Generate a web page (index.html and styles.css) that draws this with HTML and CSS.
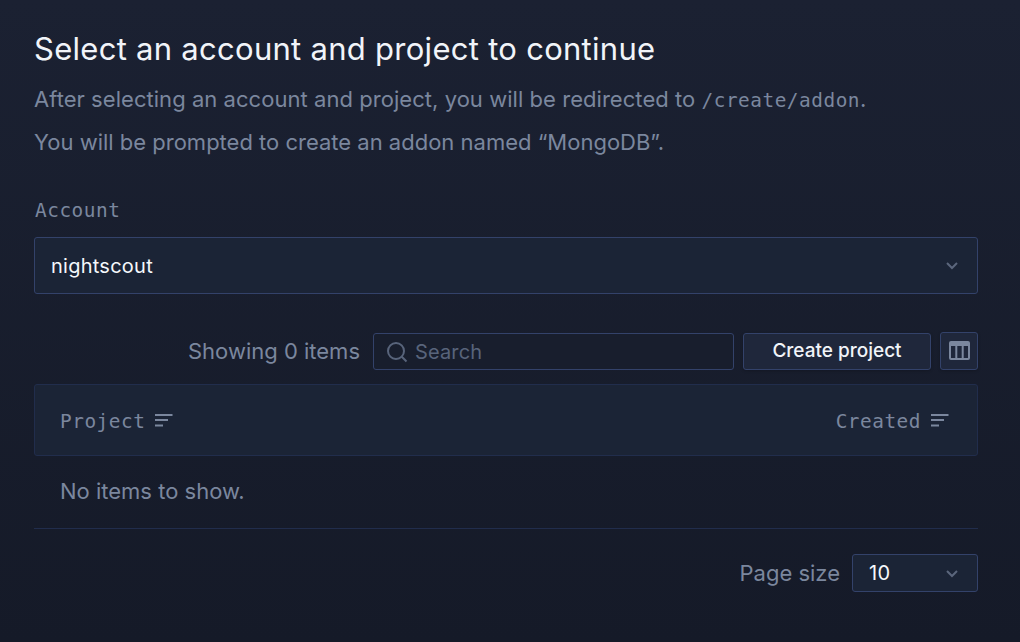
FILE: index.html
```html
<!DOCTYPE html>
<html lang="en">
<head>
<meta charset="utf-8">
<title>Select an account and project</title>
<link rel="stylesheet" href="styles.css">
</head>
<body>
<main class="page">
  <h1 class="title">Select an account and project to continue</h1>
  <p class="text redirect">After selecting an account and project, you will be redirected to <code class="mono">/create/addon</code>.</p>
  <p class="text">You will be prompted to create an addon named “MongoDB”.</p>

  <div class="label mono">Account</div>
  <div class="select account"><span>nightscout</span>
    <svg class="chevron" viewBox="0 0 12 8"><path d="M1 1l5 5 5-5"/></svg>
  </div>

  <div class="toolbar">
    <span class="count">Showing 0 items</span>
    <div class="search">
      <svg class="search-icon" viewBox="0 0 20 20"><circle cx="9" cy="9" r="8"/><path d="M14.8 14.8L19.5 19.5"/></svg>
      <span class="placeholder">Search</span>
    </div>
    <button class="create">Create project</button>
    <button class="columns" aria-label="Columns">
      <svg class="columns-icon" viewBox="0 0 21 19"><path fill-rule="evenodd" d="M2 0H19a2 2 0 0 1 2 2V17a2 2 0 0 1-2 2H2a2 2 0 0 1-2-2V2a2 2 0 0 1 2-2zM2 5V17H6.3V5zM8.3 5V17H12.7V5zM14.7 5V17H19V5z"/></svg>
    </button>
  </div>

  <div class="table-head">
    <span class="column mono">Project<svg class="sort" viewBox="0 0 18 13"><path d="M0 1H17.5M0 6H13M0 11.5H8"/></svg></span>
    <span class="column mono">Created<svg class="sort" viewBox="0 0 18 13"><path d="M0 1H17.5M0 6H13M0 11.5H8"/></svg></span>
  </div>
  <div class="empty">No items to show.</div>

  <div class="pager">
    <span class="page-label">Page size</span>
    <div class="select size"><span>10</span>
      <svg class="chevron" viewBox="0 0 12 8"><path d="M1 1l5 5 5-5"/></svg>
    </div>
  </div>
</main>
</body>
</html>
```
FILE: styles.css
```css
* { box-sizing: border-box; }
body {
  margin: 0;
  height: 642px;
  overflow: hidden;
  background: linear-gradient(#1b2132, #151a28);
  color: #7b879e;
  font-family: Inter, sans-serif;
  font-size: 22px;
  letter-spacing: 0;
}
.page { padding: 28px 42px 0 34px; }
.title { margin: 0; font-size: 31px; line-height: 42px; font-weight: 400; letter-spacing: 0.28px; color: #f1f4f9; white-space: nowrap; }
.text { margin: 0 0 7px; line-height: 36px; white-space: nowrap; }
.text code { line-height: 1; }
.redirect { letter-spacing: 0.045px; }
.title + .text { margin-top: 11px; }
.mono { font-family: "DejaVu Sans Mono", monospace; font-size: 19.4px; letter-spacing: 0.52px; }
.label { margin-top: 33px; padding-left: 1px; line-height: 36px; }
.select { display: flex; align-items: center; justify-content: space-between; border: 1px solid #33426a; border-radius: 3px; background: #1b2436; color: #f5f8fc; font-size: 20px; letter-spacing: 0.25px; }
.account { height: 57px; margin-top: 8px; padding: 0 19px 0 16px; }
.chevron { width: 12px; height: 8px; margin-top: 1px; fill: none; stroke: #5b667c; stroke-width: 2; }
.toolbar { display: flex; align-items: flex-start; justify-content: flex-end; margin-top: 38px; height: 52px; }
.count { line-height: 39px; margin-right: 13px; }
.search { display: flex; align-items: center; width: 361px; height: 37px; margin: 1px 9px 0 0; padding-left: 13px; border: 1px solid #33426a; border-radius: 3px; background: #181e2d; }
.search-icon { width: 20px; height: 20px; margin-right: 8px; fill: none; stroke: #58647b; stroke-width: 2; overflow: visible; }
.placeholder { font-size: 20px; letter-spacing: 0.15px; color: #58647b; }
.create, .columns { border: 1px solid #33426a; border-radius: 3px; background: #1f273b; box-shadow: 0 1px 3px rgba(0,0,0,.2); padding: 0; }
.create { width: 188px; height: 37px; margin: 1px 9px 0 0; padding-bottom: 2px; color: #f1f4f9; font: 500 19px/33px Inter, sans-serif; }
.columns { display: flex; align-items: center; justify-content: center; width: 38px; height: 38px; padding-bottom: 1px; }
.columns-icon { width: 21px; height: 19px; fill: #7b879e; }
.table-head { display: flex; align-items: center; justify-content: space-between; height: 72px; padding: 2px 28px 0 25px; border: 1px solid #212d4c; border-radius: 3px; background: #1b2436; }
.column { display: flex; align-items: center; }
.sort { width: 18px; height: 13px; margin: 0 0 1px 10px; fill: none; stroke: #7b879e; stroke-width: 2; }
.empty { height: 73px; padding-left: 26px; border-bottom: 1px solid #212d4c; line-height: 71px; }
.pager { display: flex; justify-content: flex-end; align-items: center; margin-top: 25px; }
.page-label { margin-right: 12px; }
.size { width: 126px; height: 38px; padding: 0 19px 0 16px; }
```
